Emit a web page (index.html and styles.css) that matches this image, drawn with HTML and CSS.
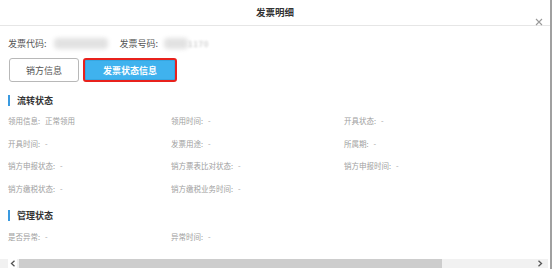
FILE: index.html
```html
<!DOCTYPE html>
<html lang="zh-CN">
<head>
    <meta charset="UTF-8">
    <meta name="viewport" content="width=device-width, initial-scale=1.0">
    <title>发票明细</title>
    <link rel="stylesheet" href="styles.css">
</head>
<body>
    <div class="dialog">
        <div class="header">
            <span class="title">发票明细</span>
            <span class="close">
                <svg width="8" height="8" viewBox="0 0 8 8"><path d="M1 1L7 7M7 1L1 7" stroke="#9a9a9a" stroke-width="1.1"/></svg>
            </span>
        </div>
        <div class="content">
            <div class="info">
                <span class="info-label">发票代码:</span>
                <span class="blur blur-code"></span>
                <span class="info-label">发票号码:</span>
                <span class="blur blur-num"></span><span class="num-tail">1170</span>
            </div>
            <div class="tabs">
                <button class="tab">销方信息</button>
                <button class="tab tab-active">发票状态信息</button>
            </div>

            <div class="section-title">流转状态</div>
            <div class="fields">
                <div class="field">领用信息: &nbsp;&nbsp;正常领用</div>
                <div class="field">领用时间: &nbsp;&nbsp;-</div>
                <div class="field">开具状态: &nbsp;&nbsp;-</div>
                <div class="field">开具时间: &nbsp;&nbsp;-</div>
                <div class="field">发票用途: &nbsp;&nbsp;-</div>
                <div class="field">所属期: &nbsp;&nbsp;-</div>
                <div class="field">销方申报状态: &nbsp;&nbsp;-</div>
                <div class="field">销方票表比对状态: &nbsp;&nbsp;-</div>
                <div class="field">销方申报时间: &nbsp;&nbsp;-</div>
                <div class="field">销方缴税状态: &nbsp;&nbsp;-</div>
                <div class="field">销方缴税业务时间: &nbsp;&nbsp;-</div>
            </div>

            <div class="section-title section-second">管理状态</div>
            <div class="fields fields-second">
                <div class="field">是否异常: &nbsp;&nbsp;-</div>
                <div class="field">异常时间: &nbsp;&nbsp;-</div>
            </div>
        </div>
        <div class="hscroll">
            <span class="arrow">
                <svg width="6" height="7" viewBox="0 0 6 7"><path d="M4.5 0.8L1.5 3.5L4.5 6.2" fill="none" stroke="#555" stroke-width="1.3"/></svg>
            </span>
            <div class="track"><div class="thumb"></div></div>
            <span class="arrow">
                <svg width="6" height="7" viewBox="0 0 6 7"><path d="M1.5 0.8L4.5 3.5L1.5 6.2" fill="none" stroke="#555" stroke-width="1.3"/></svg>
            </span>
        </div>
    </div>
</body>
</html>
```

FILE: styles.css
```css
body {
    margin: 0;
    width: 554px;
    height: 269px;
    overflow: hidden;
    background-color: #ffffff;
    font-family: "Noto Sans CJK SC", "Noto Sans", sans-serif;
}
.dialog {
    width: 550px;
    height: 269px;
    border-right: 2px solid #a0a0a0;
    display: flex;
    flex-direction: column;
}
.header {
    height: 25px;
    border-bottom: 1px solid #e6e6e6;
    display: flex;
    align-items: center;
    justify-content: center;
    position: relative;
}
.title {
    font-size: 9.5px;
    font-weight: bold;
    color: #333;
    margin-top: -1px;
}
.close {
    position: absolute;
    right: 7px;
    top: 7px;
}
.content {
    flex: 1;
    padding-left: 8px;
}
.info {
    display: flex;
    align-items: center;
    height: 14px;
    margin-top: 10px;
    font-size: 9px;
    color: #555;
}
.blur {
    display: inline-block;
    height: 11px;
    background-color: #e2e2e2;
    filter: blur(2px);
    border-radius: 4px;
}
.blur-code {
    width: 54px;
    margin: 0 12px 0 7px;
}
.blur-num {
    width: 24px;
    margin-left: 6px;
}
.num-tail {
    color: #d2d2d2;
    filter: blur(0.8px);
    font-weight: bold;
    font-size: 8px;
    letter-spacing: 0.5px;
}
.tabs {
    display: flex;
    gap: 4px;
    margin-top: 8px;
    padding-left: 1px;
}
.tab {
    height: 24px;
    width: 70px;
    padding: 0;
    border: 1px solid #b8b8b8;
    border-radius: 3px;
    background-color: #fff;
    color: #555;
    font-family: inherit;
    font-size: 9px;
}
.tab-active {
    width: 94px;
    border: 2px solid #e8211c;
    border-radius: 3px;
    background-color: #3fb2ee;
    box-shadow: inset 0 0 0 1px #36a6e0;
    color: #fff;
    font-weight: bold;
}
.section-title {
    margin-top: 13px;
    border-left: 2px solid #3a9ae0;
    padding-left: 7px;
    height: 11px;
    line-height: 11px;
    font-size: 9px;
    font-weight: bold;
    color: #333;
}
.section-second {
    margin-top: 6px;
}
.fields {
    display: grid;
    grid-template-columns: 163px 173px 1fr;
    grid-auto-rows: 22.5px;
    margin-top: 8px;
}
.fields-second {
    margin-top: 9px;
}
.field {
    font-size: 7.5px;
    color: #a0a0a0;
    line-height: 14px;
}
.hscroll {
    height: 9px;
    margin: 0 2px 1px 0;
    display: flex;
    align-items: center;
    background-color: #f1f1f1;
}
.arrow {
    width: 9px;
    height: 9px;
    display: flex;
    align-items: center;
    justify-content: center;
    background-color: #fff;
}
.hscroll .arrow:first-child {
    margin-left: 8px;
}
.hscroll .arrow:last-child {
    margin-right: 4px;
    background-color: #f1f1f1;
}
.track {
    flex: 1;
    height: 9px;
    padding-left: 2px;
}
.thumb {
    width: 423px;
    height: 9px;
    background-color: #cdcdcd;
}
```
